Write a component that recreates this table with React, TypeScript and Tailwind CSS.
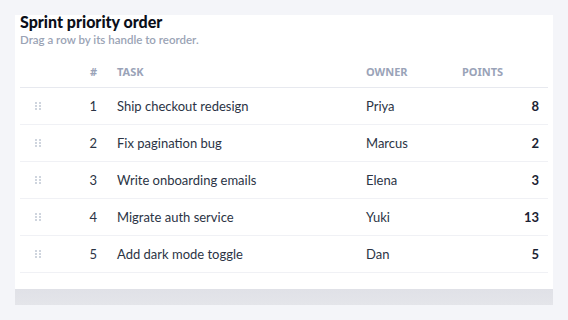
const rows = [
  { id: 1, task: 'Ship checkout redesign', owner: 'Priya', points: 8 },
  { id: 2, task: 'Fix pagination bug', owner: 'Marcus', points: 2 },
  { id: 3, task: 'Write onboarding emails', owner: 'Elena', points: 3 },
  { id: 4, task: 'Migrate auth service', owner: 'Yuki', points: 13 },
  { id: 5, task: 'Add dark mode toggle', owner: 'Dan', points: 5 },
]

function Handle() {
  return (
    <svg width="6" height="8" viewBox="0 0 6 8" className="fill-[#cfd5de]">
      <rect x="0" y="0" width="2" height="2" />
      <rect x="4" y="0" width="2" height="2" />
      <rect x="0" y="3" width="2" height="2" />
      <rect x="4" y="3" width="2" height="2" />
      <rect x="0" y="6" width="2" height="2" />
      <rect x="4" y="6" width="2" height="2" />
    </svg>
  )
}

export default function App() {
  return (
    <div className="min-h-[320px] w-[568px] bg-[#f4f5f9] p-[15px] font-['Lato',sans-serif]">
      <div className="w-[538px] bg-white">
        <div className="px-[5px] pb-[16px]">
          <h1 className="text-[16px] leading-[14px] font-black text-[#0b0f19]">Sprint priority order</h1>
          <p className="mt-[4px] text-[11.5px] leading-[14px] font-semibold text-[#9aa3b5]">Drag a row by its handle to reorder.</p>
          <table className="mt-[10px] w-[528px] table-fixed border-collapse">
            <colgroup>
              <col className="w-[50px]" />
              <col className="w-[37px]" />
              <col className="w-[249px]" />
              <col className="w-[96px]" />
              <col className="w-[96px]" />
            </colgroup>
            <thead>
              <tr className="h-[30px] border-b border-[#e7e9ef] font-['Noto_Sans',sans-serif] text-[11px] font-bold uppercase text-[#9aa3b8]">
                <th />
                <th className="pr-[10px] text-right font-bold">#</th>
                <th className="pl-[10px] text-left font-bold">Task</th>
                <th className="pl-[10px] text-left font-bold">Owner</th>
                <th className="pl-[10px] text-left font-bold">Points</th>
              </tr>
            </thead>
            <tbody>
              {rows.map(r => (
                <tr key={r.id} className="h-[37px] border-b border-[#f0f1f5] text-[13px] text-[#2b3445]">
                  <td className="pl-[15px]"><Handle /></td>
                  <td className="pt-[2px] pr-[10px] text-right">{r.id}</td>
                  <td className="pt-[2px] pl-[10px]">{r.task}</td>
                  <td className="pt-[2px] pl-[10px]">{r.owner}</td>
                  <td className="pt-[2px] pr-[9px] text-right font-bold text-[#1b2333]">{r.points}</td>
                </tr>
              ))}
            </tbody>
          </table>
        </div>
        <div className="h-[16px] bg-gradient-to-b from-[#e0e1e7] to-[#e4e5ea]" />
      </div>
    </div>
  )
}
